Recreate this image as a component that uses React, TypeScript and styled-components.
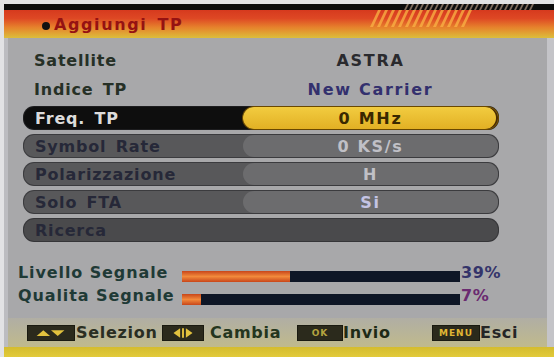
import React from "react";
import styled, { createGlobalStyle } from "styled-components";

const GlobalStyle = createGlobalStyle`
  html, body {
    margin: 0;
    padding: 0;
    background: #ececee;
  }
`;

const Screen = styled.div`
  width: 554px;
  height: 357px;
  box-sizing: border-box;
  padding: 4px 0 0 4px;
  background: #e2e2e4;
  display: flex;
  flex-direction: column;
  overflow: hidden;
  font-family: "DejaVu Sans", "Liberation Sans", sans-serif;
  font-weight: bold;
`;

const Header = styled.header`
  position: relative;
  height: 34px;
  flex: none;
  display: flex;
  flex-direction: column;
`;

const TopLine = styled.div`
  height: 6px;
  background: #0c0c0c;
`;

const Band = styled.div`
  flex: 1;
  display: flex;
  align-items: center;
  gap: 4px;
  padding-left: 38px;
  background: linear-gradient(
    180deg,
    #d63a1e 0%,
    #de4824 30%,
    #e6822c 62%,
    #dcbe3c 100%
  );
`;

const Bullet = styled.span`
  width: 8px;
  height: 8px;
  margin-top: 3px;
  border-radius: 50%;
  background: #111;
`;

const Title = styled.span`
  font-size: 16px;
  letter-spacing: 1.6px;
  word-spacing: 3px;
  color: #961212;
`;

const Hatch = styled.svg`
  position: absolute;
  left: 362px;
  top: 0;
`;

const Main = styled.main`
  flex: 1;
  display: flex;
  flex-direction: column;
  background: #a8a8aa;
  border-left: 4px solid #bcbcc0;
  border-right: 7px solid #c4c4c8;
`;

const RowList = styled.div`
  margin: 10px 0 0 15px;
  width: 476px;
  display: flex;
  flex-direction: column;
  gap: 4px;
`;

type Variant = "info" | "active" | "normal" | "action";

const rowBg: Record<Variant, string> = {
  info: "transparent",
  active: "#0e0e0e",
  normal: "#58585a",
  action: "#4a4a4c",
};

const labelColor: Record<Variant, string> = {
  info: "#263026",
  active: "#dcdcdc",
  normal: "#262838",
  action: "#262838",
};

const Row = styled.div<{ $variant: Variant }>`
  height: ${(p) => (p.$variant === "info" ? 25 : 24)}px;
  box-sizing: border-box;
  display: grid;
  grid-template-columns: 219px 1fr;
  border-radius: 11px;
  background: ${(p) => rowBg[p.$variant]};
  border: ${(p) =>
    p.$variant === "info" ? "none" : "1px solid rgba(40, 40, 44, 0.6)"};
`;

const Label = styled.span<{ $variant: Variant }>`
  display: flex;
  align-items: center;
  padding-left: 11px;
  font-size: 16px;
  letter-spacing: 0.8px;
  word-spacing: 3px;
  color: ${(p) => labelColor[p.$variant]};
`;

const Value = styled.span<{ $variant: Variant; $color?: string }>`
  display: flex;
  align-items: center;
  justify-content: center;
  border-radius: 11px;
  font-size: 16px;
  letter-spacing: 1.7px;
  color: ${(p) =>
    p.$color ?? (p.$variant === "active" ? "#3a2800" : "#c0c0c6")};
  background: ${(p) =>
    p.$variant === "active"
      ? "linear-gradient(180deg, #f2cc40, #e2b024)"
      : p.$variant === "normal"
      ? "#6c6c6e"
      : "transparent"};
  box-shadow: ${(p) =>
    p.$variant === "active" ? "inset -2px 0 0 #4a2c00, 0 0 0 1px #6a4800" : "none"};
`;

const Signal = styled.div`
  margin: 21px 0 0 10px;
  display: grid;
  grid-template-columns: 164px 278px auto;
  row-gap: 3px;
  align-items: end;
`;

const SignalLabel = styled.span`
  line-height: 20px;
  font-size: 16px;
  letter-spacing: 0.9px;
  color: #1f3a36;
`;

const Track = styled.div`
  height: 11px;
  margin-bottom: 1px;
  background: #0e1626;
  display: flex;
`;

const Fill = styled.div`
  background: linear-gradient(180deg, #c8461a, #f28a3c 50%, #c8461a);
`;

const Percent = styled.span<{ $color: string }>`
  line-height: 20px;
  padding-left: 1px;
  font-size: 16px;
  letter-spacing: 0.6px;
  color: ${(p) => p.$color};
`;

const Footer = styled.footer`
  margin-top: auto;
  height: 29px;
  box-sizing: border-box;
  padding-left: 19px;
  display: grid;
  grid-template-columns: repeat(3, 135px) 1fr;
  align-items: center;
  background: linear-gradient(180deg, #b0aea4, #c0ba8c);
`;

const Hint = styled.div<{ $gap: number }>`
  display: flex;
  align-items: center;
  gap: ${(p) => p.$gap}px;
`;

const Key = styled.span<{ $w: number }>`
  width: ${(p) => p.$w}px;
  height: 16px;
  box-sizing: border-box;
  display: flex;
  align-items: center;
  justify-content: center;
  background: #2b2a1c;
  border: 1px solid #1a1a10;
`;

const KeyText = styled.span<{ $color: string }>`
  font-size: 9px;
  letter-spacing: 1px;
  color: ${(p) => p.$color};
`;

const HintText = styled.span<{ $color: string }>`
  font-size: 16px;
  letter-spacing: 0.7px;
  color: ${(p) => p.$color};
`;

const BottomBar = styled.div`
  height: 10px;
  flex: none;
  background: linear-gradient(180deg, #d4bc2e, #e2ca3a);
`;

const rows: { label: string; value?: string; variant: Variant; color?: string }[] = [
  { label: "Satellite", value: "ASTRA", variant: "info", color: "#2a2a2e" },
  { label: "Indice TP", value: "New Carrier", variant: "info", color: "#33306e" },
  { label: "Freq. TP", value: "0 MHz", variant: "active" },
  { label: "Symbol Rate", value: "0 KS/s", variant: "normal" },
  { label: "Polarizzazione", value: "H", variant: "normal" },
  { label: "Solo FTA", value: "Si", variant: "normal", color: "#c4c4e4" },
  { label: "Ricerca", variant: "action" },
];

const signals = [
  { label: "Livello Segnale", pct: 39, color: "#34346a" },
  { label: "Qualita Segnale", pct: 7, color: "#6a2a70" },
];

const HatchDrawing = () => (
  <Hatch width="172" height="24" viewBox="0 0 172 24">
    {Array.from({ length: 26 }).map((_, i) => (
      <polygon
        key={"t" + i}
        points={`${38 + i * 5},6 ${41 + i * 5},0 ${43 + i * 5},0 ${40 + i * 5},6`}
        fill="#7c6a5c"
      />
    ))}
    {Array.from({ length: 14 }).map((_, i) => (
      <polygon
        key={"b" + i}
        points={`${4 + i * 7},23 ${12 + i * 7},6 ${15 + i * 7},6 ${7 + i * 7},23`}
        fill="rgba(250, 180, 70, 0.75)"
      />
    ))}
  </Hatch>
);

export default function App() {
  return (
    <>
      <GlobalStyle />
      <Screen>
        <Header>
          <TopLine />
          <Band>
            <Bullet />
            <Title>Aggiungi TP</Title>
          </Band>
          <HatchDrawing />
        </Header>
        <Main>
          <RowList>
            {rows.map((r) => (
              <Row key={r.label} $variant={r.variant}>
                <Label $variant={r.variant}>{r.label}</Label>
                {r.value !== undefined ? (
                  <Value $variant={r.variant} $color={r.color}>
                    {r.value}
                  </Value>
                ) : (
                  <span />
                )}
              </Row>
            ))}
          </RowList>
          <Signal>
            {signals.map((s) => (
              <React.Fragment key={s.label}>
                <SignalLabel>{s.label}</SignalLabel>
                <Track>
                  <Fill style={{ width: `${s.pct}%` }} />
                </Track>
                <Percent $color={s.color}>{s.pct}%</Percent>
              </React.Fragment>
            ))}
          </Signal>
          <Footer>
            <Hint $gap={1}>
              <Key $w={48}>
                <svg width="48" height="16" viewBox="0 0 48 16">
                  <polygon points="9,11 16,5 23,11" fill="#e2c23e" />
                  <polygon points="24,5 38,5 31,11" fill="#e2c23e" />
                </svg>
              </Key>
              <HintText $color="#2a2e22">Selezion</HintText>
            </Hint>
            <Hint $gap={6}>
              <Key $w={42}>
                <svg width="42" height="16" viewBox="0 0 42 16">
                  <polygon points="11,8 18,3 18,13" fill="#e2c23e" />
                  <rect x="20" y="3" width="2" height="10" fill="#e2c23e" />
                  <polygon points="24,3 31,8 24,13" fill="#e2c23e" />
                </svg>
              </Key>
              <HintText $color="#24361e">Cambia</HintText>
            </Hint>
            <Hint $gap={0}>
              <Key $w={46}>
                <KeyText $color="#b4a440">OK</KeyText>
              </Key>
              <HintText $color="#1e2a16">Invio</HintText>
            </Hint>
            <Hint $gap={0}>
              <Key $w={48}>
                <KeyText $color="#e0b634">MENU</KeyText>
              </Key>
              <HintText $color="#262626">Esci</HintText>
            </Hint>
          </Footer>
        </Main>
        <BottomBar />
      </Screen>
    </>
  );
}
